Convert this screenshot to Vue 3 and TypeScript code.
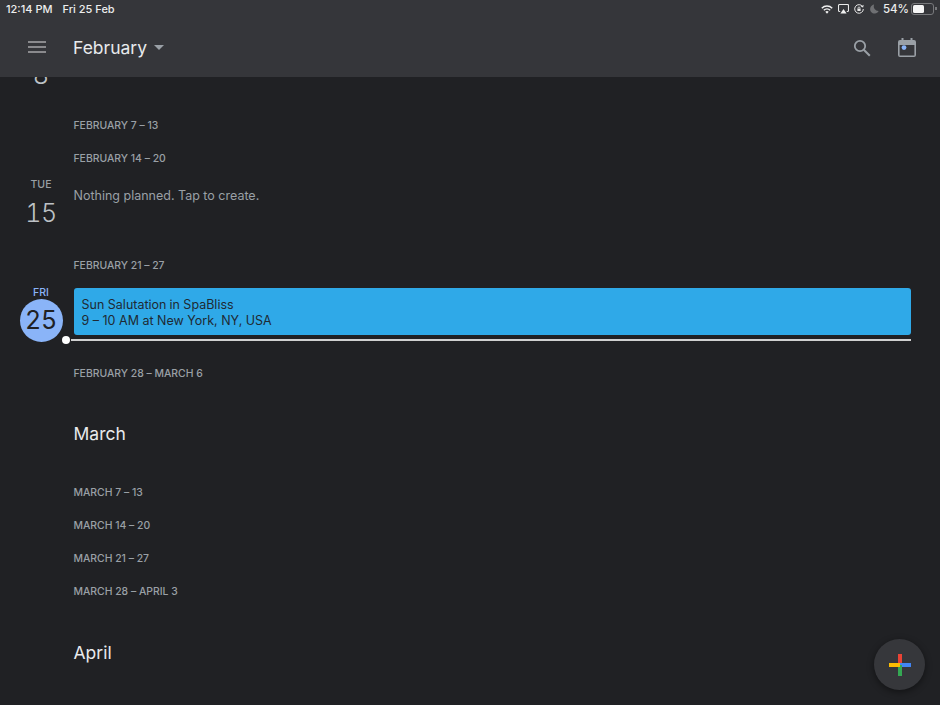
<script setup lang="ts">
const marchWeeks: string[] = ['MARCH 7 – 13', 'MARCH 14 – 20', 'MARCH 21 – 27', 'MARCH 28 – APRIL 3']
</script>

<template>
  <div class="app">
    <header class="header">
      <div class="status">
        <div class="status-left"><span>12:14 PM</span><span>Fri 25 Feb</span></div>
        <div class="status-right">
          <svg class="i-wifi" width="12" height="9" viewBox="0 0 14 11"><path d="M7 10.6 4.9 8.3a3 3 0 0 1 4.2 0Z M3.7 7.1 2.5 5.8a6.4 6.4 0 0 1 9 0l-1.2 1.3a4.7 4.7 0 0 0-6.6 0Z M1.3 4.6 0 3.3a9.9 9.9 0 0 1 14 0l-1.3 1.3a8.1 8.1 0 0 0-11.4 0Z" fill="#f1f1f1"/></svg>
          <svg class="i-air" width="11" height="10" viewBox="0 0 11 10"><path d="M2.2 7.5H1.5a1 1 0 0 1-1-1V1.5a1 1 0 0 1 1-1h8a1 1 0 0 1 1 1v5a1 1 0 0 1-1 1h-.7" fill="none" stroke="#e8e8e8" stroke-width="1.1"/><path d="M5.5 5 8.6 9.6H2.4Z" fill="#f1f1f1"/></svg>
          <svg class="i-lock" width="10" height="10" viewBox="0 0 10 10"><path d="M8.6 2.6A4.3 4.3 0 1 0 9.3 5" fill="none" stroke="#e8e8e8" stroke-width="1"/><path d="M9.6 0.8 9.2 3.6 6.6 2.8Z" fill="#e8e8e8"/><rect x="3.4" y="4.6" width="3.2" height="2.4" fill="#e8e8e8"/><path d="M4 4.6V4a1 1 0 0 1 2 0v.6" fill="none" stroke="#e8e8e8" stroke-width=".8"/></svg>
          <svg class="i-moon" width="9" height="10" viewBox="0 0 10 11"><path d="M4.6.6a5 5 0 1 0 5 7.2A5.2 5.2 0 0 1 4.6.6Z" fill="#6f7073"/></svg>
          <span class="pct">54%</span>
          <span class="battery"><span class="battery-fill"></span></span>
        </div>
      </div>
      <div class="toolbar">
        <svg class="menu" width="18" height="12" viewBox="0 0 18 12"><path d="M0 1h18M0 6h18M0 11h18" stroke="#a6a7a9" stroke-width="1.7"/></svg>
        <div class="month-title">February</div>
        <svg class="caret" width="10" height="5" viewBox="0 0 10 5"><path d="M0 0h10L5 5Z" fill="#9aa0a6"/></svg>
        <div class="spacer"></div>
        <svg class="search" width="18" height="18" viewBox="0 0 18 18"><circle cx="7" cy="7" r="5.2" fill="none" stroke="#9aa0a6" stroke-width="1.8"/><path d="m10.8 10.8 6 6" stroke="#9aa0a6" stroke-width="2"/></svg>
        <svg class="calendar" width="18" height="19" viewBox="0 0 18 19"><path d="M2 2h14a2 2 0 0 1 2 2v13a2 2 0 0 1-2 2H2a2 2 0 0 1-2-2V4a2 2 0 0 1 2-2Zm-.4 5v10.4h14.8V7Z" fill="#9aa0a6" fill-rule="evenodd"/><path d="M3.5 0h2v3h-2ZM12.5 0h2v3h-2Z" fill="#9aa0a6"/><circle cx="6" cy="9.6" r="2.4" fill="#8ab4f8"/></svg>
      </div>
    </header>

    <main class="main">
      <div class="clipped-day">8</div>
      <div class="week">FEBRUARY 7 – 13</div>
      <div class="week">FEBRUARY 14 – 20</div>
      <div class="day-row nothing-row">
        <div class="date"><span class="dow">TUE</span><span class="num">15</span></div>
        <div class="nothing">Nothing planned. Tap to create.</div>
      </div>
      <div class="week">FEBRUARY 21 – 27</div>
      <div class="day-row today-row">
        <div class="date today"><span class="dow">FRI</span><span class="num circle">25</span></div>
        <div class="event-col">
          <div class="event">
            <div class="event-title">Sun Salutation<span class="in">in SpaBliss</span></div>
            <div>9 – 10 AM at New York, NY, USA</div>
          </div>
          <div class="now-line"><span class="now-dot"></span></div>
        </div>
      </div>
      <div class="week">FEBRUARY 28 – MARCH 6</div>
      <div class="month month-march">March</div>
      <div v-for="w in marchWeeks" :key="w" class="week">{{ w }}</div>
      <div class="month month-april">April</div>
    </main>

    <button class="fab" aria-label="Create">
      <svg width="24" height="24" viewBox="0 0 24 24">
        <rect x="10" y="1" width="4" height="11" fill="#ea4335"/>
        <rect x="12" y="10" width="11" height="4" fill="#4285f4"/>
        <rect x="10" y="12" width="4" height="11" fill="#34a853"/>
        <rect x="1" y="10" width="11" height="4" fill="#fbbc04"/>
      </svg>
    </button>
  </div>
</template>

<style>
html, body { margin: 0; background: #202124; }
</style>

<style scoped>
.app {
  width: 940px;
  height: 705px;
  position: relative;
  overflow: hidden;
  background: #202124;
  color: #bdc1c6;
  font-family: Inter, Roboto, "Liberation Sans", sans-serif;
  display: flex;
  flex-direction: column;
}
.header {
  height: 77px;
  flex: none;
  background: #35363a;
  position: relative;
  z-index: 2;
}
.status {
  height: 18px;
  display: flex;
  justify-content: space-between;
  align-items: center;
  padding: 0 5px 0 6px;
  font-size: 11px;
  font-weight: 500;
  color: #eceded;
}
.status-left { display: flex; gap: 10px; }
.status-right { display: flex; align-items: center; }
.i-air { margin-left: 5px; }
.i-lock { margin-left: 5px; }
.i-moon { margin-left: 6px; }
.pct { font-size: 11.5px; margin-left: 3.5px; }
.battery {
  width: 19px;
  height: 8px;
  border: 1px solid #77787b;
  border-radius: 3px;
  padding: 1px;
  margin-left: 2px;
  margin-right: 1px;
  display: block;
  position: relative;
}
.battery::after {
  content: "";
  position: absolute;
  right: -3.5px;
  top: 2.5px;
  width: 1.5px;
  height: 3px;
  background: #77787b;
}
.battery-fill { display: block; width: 11px; height: 100%; background: #f5f5f5; border-radius: 1.5px; }
.toolbar {
  height: 59px;
  display: flex;
  align-items: center;
  padding: 0 24px 0 28px;
  box-sizing: border-box;
}
.menu { margin-bottom: 1px; }
.month-title { margin-left: 27px; font-size: 17.5px; color: #e8eaed; }
.caret { margin-left: 7px; }
.spacer { flex: 1; }
.search { margin-right: 27px; }
.main {
  flex: 1;
  min-height: 0;
  overflow: hidden;
  padding-top: 32px;
  position: relative;
  z-index: 1;
}
.clipped-day {
  position: absolute;
  left: 0;
  width: 82px;
  text-align: center;
  top: -17px;
  font-size: 25px;
  line-height: 30px;
  font-weight: 300;
  color: #bdc1c6;
}
.week {
  height: 33px;
  line-height: 33px;
  padding-left: 73.5px;
  font-size: 10.4px;
  font-weight: 500;
  color: #9aa0a6;
}
.day-row { display: flex; }
.nothing-row { height: 74px; }
.today-row { height: 75px; }
.date {
  width: 82px;
  margin-right: -8.5px;
  flex: none;
  display: flex;
  flex-direction: column;
  align-items: center;
}
.dow { font-size: 10.5px; line-height: 14px; font-weight: 500; margin-top: 3px; color: #9aa0a6; }
.num {
  font-size: 25px;
  line-height: 30px;
  margin-top: 6px;
  font-weight: 300;
  font-variant-numeric: tabular-nums;
  letter-spacing: -.3px;
  color: #bdc1c6;
}
.nothing { margin-top: 12px; font-size: 12.5px; line-height: 17px; color: #9aa0a6; }
.today .dow { color: #8ab4f8; margin-top: 4px; margin-bottom: -1px; }
.circle {
  width: 43px;
  height: 43px;
  margin-top: 0;
  border-radius: 50%;
  background: #8ab4f8;
  color: #202124;
  text-align: center;
  line-height: 43px;
  font-weight: 400;
}
.event-col { flex: 1; padding-right: 29px; padding-top: 6px; }
.event {
  height: 47px;
  box-sizing: border-box;
  padding: 9px 8px 8px;
  border-radius: 3px;
  background: #2fa9e8;
  color: #1f2a33;
  font-size: 12.5px;
  line-height: 16px;
}
.in { margin-left: 3px; }
.now-line {
  height: 2px;
  margin-top: 4px;
  margin-left: -3px;
  background: #d0d0d0;
  position: relative;
}
.now-dot {
  position: absolute;
  left: -9px;
  top: -3px;
  width: 8px;
  height: 8px;
  border-radius: 50%;
  background: #fff;
}
.month { padding-left: 73.5px; font-size: 17.5px; color: #e8eaed; }
.month-march { height: 86px; line-height: 88px; }
.month-april { height: 88px; line-height: 90px; }
.fab {
  position: absolute;
  left: 874px;
  top: 639px;
  width: 51px;
  height: 51px;
  padding: 0;
  border: 0;
  border-radius: 50%;
  background: #36373b;
  box-shadow: 0 2px 7px rgba(0, 0, 0, .45);
  display: flex;
  align-items: center;
  justify-content: center;
  z-index: 3;
}
</style>
